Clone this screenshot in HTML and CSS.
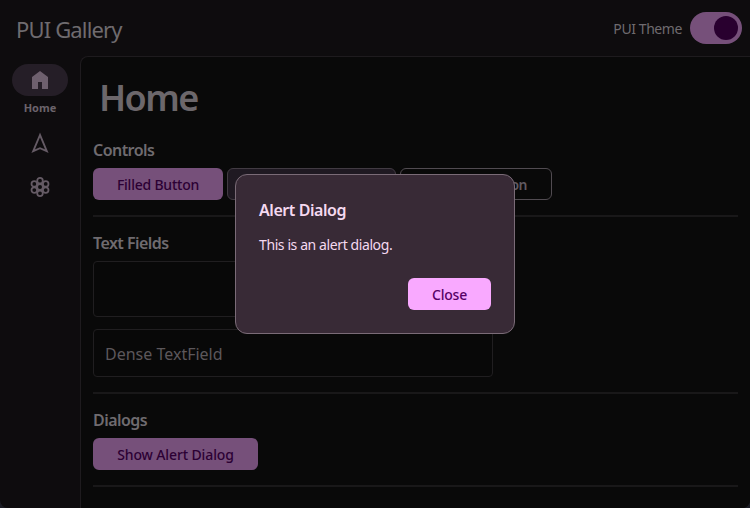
FILE: index.html
```html
<!DOCTYPE html>
<html lang="en">
<head>
<meta charset="utf-8">
<title>PUI Gallery</title>
<link rel="stylesheet" href="styles.css">
</head>
<body>
<div class="window">
  <header class="topbar">
    <div class="brand"><span>PUI Gallery</span></div>
    <div class="theme"><span class="theme-label">PUI Theme</span><span class="switch"><i class="thumb"></i></span></div>
  </header>
  <div class="body">
    <nav class="rail">
      <a class="nav-item active">
        <span class="pill"><svg width="24" height="24" viewBox="0 0 24 24"><path fill="currentColor" d="M4 21V9l8-6 8 6v12h-6v-7h-4v7z"/></svg></span>
        <span class="nav-label">Home</span>
      </a>
      <a class="nav-item"><svg width="24" height="24" viewBox="0 0 24 24" fill="none" stroke="currentColor" stroke-width="1.9"><path d="M12 4 5.2 20.1 12 17.2l6.8 2.9z"/></svg></a>
      <a class="nav-item last"><svg width="24" height="24" viewBox="0 0 24 24" fill="none" stroke="currentColor" stroke-width="1.8"><circle cx="12" cy="12" r="2.9"/><circle cx="12" cy="5.7" r="2.8"/><circle cx="17.7" cy="8.9" r="2.8"/><circle cx="17.7" cy="15.1" r="2.8"/><circle cx="12" cy="18.3" r="2.8"/><circle cx="6.3" cy="15.1" r="2.8"/><circle cx="6.3" cy="8.9" r="2.8"/></svg></a>
    </nav>
    <main class="page">
      <h1>Home</h1>
      <section>
        <h2 class="t-controls">Controls</h2>
        <div class="buttons">
          <button class="btn filled w-filled"><span>Filled Button</span></button>
          <button class="btn tonal"><span>Filled Tonal Button</span></button>
          <button class="btn outlined"><span>Outlined Button</span></button>
        </div>
      </section>
      <hr>
      <section>
        <h2 class="t-fields">Text Fields</h2>
        <div class="field tall"></div>
        <div class="field dense"><span>Dense TextField</span></div>
      </section>
      <hr>
      <section>
        <h2 class="t-dialogs">Dialogs</h2>
        <button class="btn filled w-show"><span>Show Alert Dialog</span></button>
      </section>
      <hr>
    </main>
  </div>
</div>
<div class="dialog" role="alertdialog">
  <h3>Alert Dialog</h3>
  <p>This is an alert dialog.</p>
  <div class="actions"><button class="btn close"><span>Close</span></button></div>
</div>
</body>
</html>
```
FILE: styles.css
```css
* { box-sizing: border-box; }
body {
  margin: 0;
  background: #1b1c24;
  font-family: "Noto Sans", "Open Sans", sans-serif;
  font-size: 14px;
  color: #6f6b6f;
}
.window {
  width: 750px;
  height: 508px;
  overflow: hidden;
  background: #0e0c0e;
  border-radius: 0 0 8px 8px;
  display: flex;
  flex-direction: column;
}
.topbar {
  height: 56px;
  flex: none;
  padding: 0 8px 0 16px;
  display: flex;
  align-items: center;
  justify-content: space-between;
}
.brand { font-size: 22px; line-height: 30px; letter-spacing: -0.85px; padding-top: 1px; }
.theme { display: flex; align-items: center; gap: 8px; }
.theme-label { letter-spacing: -0.42px; line-height: 20px; padding-top: 1px; }
.switch {
  width: 52px;
  height: 32px;
  border-radius: 16px;
  background: #76507a;
  display: flex;
  align-items: center;
  justify-content: flex-end;
  padding-right: 4px;
}
.thumb { width: 24px; height: 24px; border-radius: 50%; background: #29002f; }
.body { flex: 1; display: flex; min-height: 0; }
.rail {
  width: 80px;
  flex: none;
  padding-top: 8px;
  display: flex;
  flex-direction: column;
  align-items: center;
  color: #655b65;
}
.nav-item { display: flex; flex-direction: column; align-items: center; }
.nav-item.active { height: 67px; }
.nav-item.last { margin-top: 20px; }
.nav-item svg { display: block; }
.pill {
  width: 56px;
  height: 32px;
  border-radius: 16px;
  background: #251e27;
  display: flex;
  align-items: center;
  justify-content: center;
}
.pill svg { color: #6e606e; }
.nav-label { font-size: 11px; font-weight: 700; line-height: 16px; margin-top: 4px; color: #6b636b; }
.page {
  flex: 1;
  min-width: 0;
  background: #090909;
  border: 1px solid #1e1b1e;
  border-width: 1px 0 0 1px;
  border-top-left-radius: 8px;
  padding: 12px 12px 0;
}
h1 { margin: 0 0 8px 6px; font-size: 36px; line-height: 58px; font-weight: 600; letter-spacing: -1.6px; word-spacing: 0; color: #6c676b; }
h2 { margin: 0; font-size: 16px; line-height: 24px; font-weight: 600; height: 33px; padding-top: 3px; letter-spacing: -0.55px; }
hr { height: 2px; border: 0; margin: 15px 0 11px; background: #191819; }
.buttons { display: flex; gap: 4px; }
.btn {
  height: 32px;
  border: 0;
  border-radius: 6px;
  padding: 1px 0 0;
  font: 500 14px/20px "Noto Sans", "Open Sans", sans-serif;
  letter-spacing: -0.22px;
  display: flex;
  align-items: center;
  justify-content: center;
  white-space: nowrap;
}
.filled { background: #76507a; color: #2c0034; }
.w-filled { width: 130px; }
.w-show { width: 165px; letter-spacing: -0.12px; }
.tonal { width: 169px; background: #1f1922; border: 1px solid #423b43; color: #6e606e; }
.outlined { width: 152px; background: transparent; border: 1px solid #514b51; color: #615a61; font-weight: 600; letter-spacing: -0.55px; }
.field {
  width: 400px;
  border: 1px solid #201e20;
  border-radius: 4px;
  background: #080808;
  display: flex;
  align-items: center;
  padding-left: 11px;
  font-size: 16px;
  color: #5c575b;
}
.tall { height: 56px; margin-bottom: 12px; }
.dense { height: 48px; padding-top: 2px; }
.dialog {
  position: absolute;
  left: 235px;
  top: 174px;
  width: 280px;
  height: 160px;
  border: 1px solid #7a6b77;
  border-radius: 12px;
  background: #382a36;
  padding: 23px;
  color: #f5d9f0;
}
h3 { margin: 0; font-size: 16px; line-height: 24px; font-weight: 600; letter-spacing: -0.43px; }
p { margin: 13px 0 0; line-height: 20px; letter-spacing: -0.4px; }
.actions { display: flex; justify-content: flex-end; margin-top: 23px; }
.close { width: 83px; background: #f9a9ff; color: #570066; padding-top: 2px; }
```
